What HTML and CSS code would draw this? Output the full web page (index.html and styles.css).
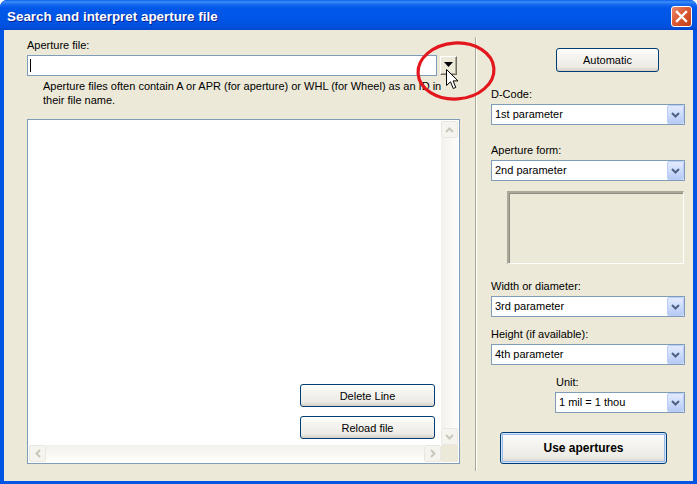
FILE: index.html
```html
<!DOCTYPE html>
<html>
<head>
<meta charset="utf-8">
<link rel="stylesheet" href="styles.css">
</head>
<body>
<div class="window">
  <div class="titlebar">
    <span class="title">Search and interpret aperture file</span>
    <span class="close"><svg width="19" height="19" viewBox="0 0 19 19"><path d="M5 5 L14 14 M14 5 L5 14" stroke="#fff" stroke-width="2.4" stroke-linecap="square"/></svg></span>
  </div>
  <div class="client">
    <div class="left">
      <div class="lbl first">Aperture file:</div>
      <div class="filerow">
        <div class="input"><span class="caret"></span></div>
        <div class="smallbtn"><svg width="9" height="5" viewBox="0 0 9 5"><path d="M0 0 H9 L4.5 5 Z" fill="#000"/></svg></div>
      </div>
      <p class="help">Aperture files often contain A or APR (for aperture) or WHL (for Wheel) as an ID in<br>their file name.</p>
      <div class="listbox">
        <div class="listarea">
          <button class="btn lbtn">Delete Line</button>
          <button class="btn lbtn">Reload file</button>
        </div>
        <div class="vscroll">
          <div class="sbtn"><svg width="9" height="6" viewBox="0 0 9 6"><path d="M1 5 L4.5 1.5 L8 5" fill="none" stroke="#c9c7ba" stroke-width="2"/></svg></div>
          <div class="vtrack"></div>
          <div class="sbtn"><svg width="9" height="6" viewBox="0 0 9 6"><path d="M1 1 L4.5 4.5 L8 1" fill="none" stroke="#c9c7ba" stroke-width="2"/></svg></div>
        </div>
        <div class="hscroll">
          <div class="sbtn"><svg width="6" height="9" viewBox="0 0 6 9"><path d="M5 1 L1.5 4.5 L5 8" fill="none" stroke="#c9c7ba" stroke-width="2"/></svg></div>
          <div class="htrack"></div>
          <div class="sbtn"><svg width="6" height="9" viewBox="0 0 6 9"><path d="M1 1 L4.5 4.5 L1 8" fill="none" stroke="#c9c7ba" stroke-width="2"/></svg></div>
        </div>
        <div class="corner"></div>
      </div>
    </div>
    <div class="sep"></div>
    <div class="right">
      <button class="btn auto">Automatic</button>
      <div class="field f-dcode">
        <div class="lbl">D-Code:</div>
        <div class="combo"><span class="ctext">1st parameter</span><span class="carrow"><svg width="9" height="6" viewBox="0 0 9 6"><path d="M1 1 L4.5 4.5 L8 1" fill="none" stroke="#4d6185" stroke-width="2"/></svg></span></div>
      </div>
      <div class="field f-form">
        <div class="lbl">Aperture form:</div>
        <div class="combo"><span class="ctext">2nd parameter</span><span class="carrow"><svg width="9" height="6" viewBox="0 0 9 6"><path d="M1 1 L4.5 4.5 L8 1" fill="none" stroke="#4d6185" stroke-width="2"/></svg></span></div>
      </div>
      <div class="preview"></div>
      <div class="field f-width">
        <div class="lbl">Width or diameter:</div>
        <div class="combo"><span class="ctext">3rd parameter</span><span class="carrow"><svg width="9" height="6" viewBox="0 0 9 6"><path d="M1 1 L4.5 4.5 L8 1" fill="none" stroke="#4d6185" stroke-width="2"/></svg></span></div>
      </div>
      <div class="field f-height">
        <div class="lbl">Height (if available):</div>
        <div class="combo"><span class="ctext">4th parameter</span><span class="carrow"><svg width="9" height="6" viewBox="0 0 9 6"><path d="M1 1 L4.5 4.5 L8 1" fill="none" stroke="#4d6185" stroke-width="2"/></svg></span></div>
      </div>
      <div class="field f-unit">
        <div class="lbl">Unit:</div>
        <div class="combo"><span class="ctext">1 mil = 1 thou</span><span class="carrow"><svg width="9" height="6" viewBox="0 0 9 6"><path d="M1 1 L4.5 4.5 L8 1" fill="none" stroke="#4d6185" stroke-width="2"/></svg></span></div>
      </div>
      <button class="btn big">Use apertures</button>
    </div>
  </div>
  <svg class="ring" width="100" height="76" viewBox="0 0 100 76"><ellipse cx="46" cy="35" rx="38" ry="28" fill="none" stroke="#e3161e" stroke-width="3.2" transform="rotate(-4 46 35)"/></svg>
  <svg class="cursor" width="13" height="21" viewBox="0 0 13 21"><path d="M0.5 0.5 L0.5 16.5 L4.5 12.8 L7.3 19.5 L9.8 18.4 L7.1 11.9 L12 11.9 Z" fill="#fff" stroke="#000" stroke-width="1" stroke-linejoin="miter"/></svg>
</div>
</body>
</html>
```
FILE: styles.css
```css
* { box-sizing: border-box; }
html, body { margin: 0; padding: 0; }
body {
  width: 697px;
  height: 484px;
  overflow: hidden;
  background: #ffffff;
  font-family: "Liberation Sans", Arial, sans-serif;
  font-size: 11px;
  color: #000;
}
.window {
  position: relative;
  width: 697px;
  height: 484px;
  display: flex;
  flex-direction: column;
  background: #0055e5;
  border-radius: 7px 7px 0 0;
  overflow: hidden;
}
.titlebar {
  height: 30px;
  flex: none;
  display: flex;
  align-items: flex-start;
  justify-content: space-between;
  background: linear-gradient(to bottom, #0a5ff0 0, #3d8ff7 2px, #1b6cf0 4px, #0058ea 8px, #0055e5 20px, #0050dd 27px, #0046cc 30px);
}
.title {
  margin: 9px 0 0 7px;
  font-weight: bold;
  font-size: 13.4px;
  line-height: 16px;
  color: #fff;
  text-shadow: 1px 1px 0 #0a1e8c;
}
.close {
  margin: 6px 5px 0 0;
  width: 21px;
  height: 21px;
  border: 1px solid #fff;
  border-radius: 3px;
  background: linear-gradient(135deg, #e98a6f 0%, #dc5a36 45%, #c43d14 100%);
  display: flex;
  align-items: center;
  justify-content: center;
}
.client {
  flex: 1;
  margin: 0 4px 3px 4px;
  background: #ece9d8;
  display: flex;
  align-items: flex-start;
}
.left {
  margin-left: 23px;
  width: 433px;
  display: flex;
  flex-direction: column;
}
.lbl {
  line-height: 13px;
  height: 13px;
  white-space: nowrap;
}
.lbl.first { margin-top: 9px; }
.filerow {
  margin-top: 3px;
  display: flex;
  align-items: flex-start;
}
.input {
  width: 410px;
  height: 21px;
  background: #fff;
  border: 1px solid #7f9db9;
  padding: 3px 0 0 2px;
}
.caret {
  display: block;
  width: 1px;
  height: 13px;
  background: #000;
}
.smallbtn {
  margin-left: 3px;
  margin-top: 1px;
  width: 17px;
  height: 19px;
  background: #ece9d8;
  border-top: 1px solid #fff;
  border-left: 1px solid #fff;
  border-right: 1px solid #716f64;
  border-bottom: 1px solid #716f64;
  box-shadow: inset -1px -1px 0 #aca899;
  display: flex;
  align-items: center;
  justify-content: center;
  padding-bottom: 2px;
}
.help {
  margin: 3px 0 0 16px;
  line-height: 14px;
  white-space: nowrap;
}
.listbox {
  margin-top: 12px;
  width: 433px;
  height: 345px;
  border: 1px solid #7f9db9;
  padding: 1px;
  background: #fff;
  display: grid;
  grid-template-columns: 1fr 17px;
  grid-template-rows: 1fr 17px;
}
.listarea {
  display: flex;
  flex-direction: column;
  align-items: flex-end;
  justify-content: flex-end;
  gap: 9px;
  padding: 0 6px 6px 0;
}
.btn {
  font-family: "Liberation Sans", Arial, sans-serif;
  font-size: 11px;
  color: #000;
  border: 1px solid #003c74;
  border-radius: 3px;
  background: linear-gradient(to bottom, #ffffff 0%, #f6f5f1 30%, #ecebe6 80%, #d6d0c5 100%);
  padding: 0;
  margin: 0;
}
.lbtn {
  width: 135px;
  height: 23px;
}
.vscroll {
  display: flex;
  flex-direction: column;
}
.hscroll {
  display: flex;
  flex-direction: row;
}
.sbtn {
  flex: none;
  width: 17px;
  height: 17px;
  border: 1px solid #e9e8e0;
  border-radius: 2px;
  background: #f5f4ef;
  display: flex;
  align-items: center;
  justify-content: center;
}
.vtrack {
  flex: 1;
  background: linear-gradient(to right, #f3f1ec, #fefefb);
}
.htrack {
  flex: 1;
  background: linear-gradient(to bottom, #f3f1ec, #fefefb);
}
.corner { background: #ece9d8; }
.sep {
  margin: 7px 0 0 15px;
  width: 2px;
  height: 434px;
  border-left: 1px solid #aca899;
  border-right: 1px solid #fff;
}
.right {
  margin-left: 14px;
  width: 194px;
  display: flex;
  flex-direction: column;
  align-items: flex-start;
}
.auto {
  margin: 18px 0 0 65px;
  width: 103px;
  height: 24px;
}
.field {
  display: flex;
  flex-direction: column;
  gap: 3px;
  width: 194px;
}
.f-dcode { margin-top: 16px; }
.f-form { margin-top: 19px; }
.f-width { margin-top: 16px; }
.f-height { margin-top: 11px; }
.f-unit { margin-top: 11px; margin-left: 64px; width: 130px; }
.f-unit .lbl { padding-left: 1px; }
.combo {
  height: 21px;
  background: #fff;
  border: 1px solid #7f9db9;
  display: flex;
  align-items: stretch;
  justify-content: space-between;
}
.ctext {
  padding-left: 3px;
  line-height: 19px;
  white-space: nowrap;
}
.carrow {
  width: 17px;
  border: 1px solid #b9cdf8;
  border-radius: 2px;
  background: linear-gradient(to bottom, #e3ecfe 0%, #cddcfb 50%, #b7caf5 100%);
  display: flex;
  align-items: center;
  justify-content: center;
}
.preview {
  margin: 10px 0 0 16px;
  width: 177px;
  height: 73px;
  border-top: 2px solid #aca899;
  border-left: 2px solid #aca899;
  border-bottom: 1px solid #fff;
  border-right: 1px solid #fff;
  box-shadow: inset 1px 1px 0 #8f8d82;
}
.big {
  margin: 19px 0 0 9px;
  width: 167px;
  height: 32px;
  font-weight: bold;
  font-size: 12px;
  box-shadow: inset 0 0 0 1px #cee7ff, inset 0 0 0 2px #98b8ea;
}
.ring {
  position: absolute;
  left: 410px;
  top: 36px;
}
.cursor {
  position: absolute;
  left: 446px;
  top: 69px;
}
```
